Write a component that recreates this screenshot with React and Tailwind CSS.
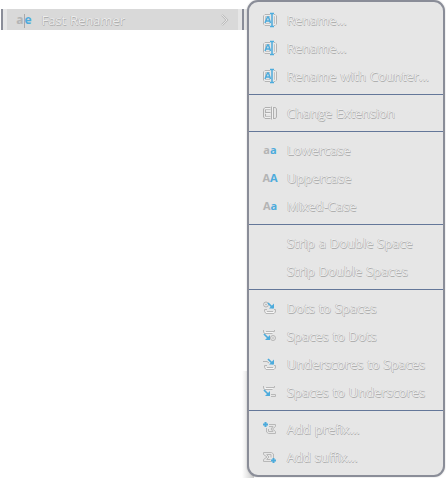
const BLUE = '#4dabdc';

function RenameIcon() {
  return (
    <svg width="16" height="16" viewBox="0 0 16 16" fill="none">
      <path d="M8 2.500H3L1.500 4v8L3 13.500H8M12 2.500h1l1.500 1.500v8l-1.500 1.500h-1" stroke="#b5b5b5" />
      <path d="M8 4.500H3.500v7H8M12 4.500h.5v7H12" stroke="#c4c4c4" />
      <path d="M8 3.500H2.500v9H8M12 3.500h1.500v9H12" stroke="#f2f2f2" strokeWidth=".6" />
      <path d="M3 11L5.500 5h1L8.500 11M4 9h4" stroke={BLUE} strokeWidth="1.500" />
      <path d="M8 1.500h4M8 14.500h4M10 1.500v13" stroke={BLUE} strokeWidth="1.500" />
    </svg>
  );
}

function ExtensionIcon() {
  return (
    <svg width="16" height="16" viewBox="0 0 16 16" fill="none" stroke="#b0b0b0">
      <path d="M8.500 2.500H3L1.500 4v8L3 13.500h5.500M3.500 5v6M3 7.500h5.500M9.500 1.500v13M11.500 2v12M12 2.500h1.500L14.500 4v8l-1 1.500H12" />
      <path d="M3 4.500h5.500M3 11.500h5.500" stroke="#c4c4c4" />
      <path d="M3 3.500h5M3 8.500h5M3 12.500h5M10.500 2v12" stroke="#f5f5f5" strokeWidth=".7" />
    </svg>
  );
}

function CaseIcon({ first, second }) {
  return (
    <span className="flex w-4 justify-center font-['Open_Sans',sans-serif] text-[11px] leading-4 font-bold">
      <span className="text-[#b4b4b4]">{first}</span>
      <span className="text-[#4dabdc]">{second}</span>
    </span>
  );
}

function ConvertIcon({ down, dots }) {
  return (
    <svg width="16" height="16" viewBox="0 0 16 16" fill="none">
      {down ? (
        <>
          {dots ? (
            <>
              <circle cx="4" cy="4.500" r="2.500" stroke="#b5b5b5" />
              <circle cx="4" cy="4.500" r=".8" fill="#b0b0b0" />
            </>
          ) : (
            <path d="M1 5.500h4l2 1.500" stroke="#b5b5b5" />
          )}
          <path d="M5 9.500H2.500v2L4 13.500h8l1.500-1.500v-2.500H12M5 11.500h6" stroke="#b8b8b8" />
          <path d="M4 12.500h8" stroke="#f7f7f7" />
          <path d="M6 3l5 5" stroke={BLUE} strokeWidth="1.700" />
          <path d="M12 3.500v5H7z" fill={BLUE} />
        </>
      ) : (
        <>
          <path d="M1.500 2v2l1 1.500h8M12.500 2v1.500H4" stroke="#b8b8b8" />
          <path d="M3 4.500h8" stroke="#f5f5f5" />
          <path d="M2 6l5 5" stroke={BLUE} strokeWidth="1.700" />
          <path d="M8 7v5H3z" fill={BLUE} />
          {dots ? (
            <>
              <circle cx="11" cy="10" r="2.500" stroke="#b5b5b5" />
              <circle cx="11" cy="10" r=".8" fill="#b0b0b0" />
            </>
          ) : (
            <path d="M9 10.500h4.500v2H9" stroke="#b8b8b8" />
          )}
        </>
      )}
    </svg>
  );
}

function AffixIcon({ suffix }) {
  return (
    <svg width="16" height="16" viewBox="0 0 16 16" fill="none">
      {suffix ? (
        <>
          <path d="M1.500 3.500h8l2 1.500v4M1.500 3.500v2L5 8l-3.500 2.500v2h8M4.500 5.500h4.500v3M4.500 10.500h4M5 6l2 2-2 2" stroke="#b8b8b8" />
          <path d="M11.500 9v5M9 11.500h5" stroke={BLUE} strokeWidth="2" />
        </>
      ) : (
        <>
          <path d="M7 3.500h6.500v2L10.500 8l3 2.500v2h-7L4.500 11V7M7 5.500h4L9 8l2 2.500H6.500V8" stroke="#b8b8b8" />
          <path d="M3.500 1v5M1 3.500h5" stroke={BLUE} strokeWidth="2" />
        </>
      )}
    </svg>
  );
}

function Label({ children, className = '' }) {
  return (
    <span
      className={`font-['Open_Sans','Noto_Sans',sans-serif] text-[13px] leading-5 tracking-[-0.06px] whitespace-nowrap text-[#ececec] antialiased [font-variant-ligatures:none] [text-shadow:-0.5px_-0.5px_0_#b0b0b0,0.5px_0.5px_0_#b0b0b0] [word-spacing:0.6px] ${className}`}
    >
      {children}
    </span>
  );
}

const groups = [
  [
    [<RenameIcon />, 'Rename...'],
    [<RenameIcon />, 'Rename...'],
    [<RenameIcon />, 'Rename with Counter...'],
  ],
  [[<ExtensionIcon />, 'Change Extension']],
  [
    [<CaseIcon first="a" second="a" />, 'Lowercase'],
    [<CaseIcon first="A" second="A" />, 'Uppercase'],
    [<CaseIcon first="A" second="a" />, 'Mixed-Case'],
  ],
  [
    [null, 'Strip a Double Space'],
    [null, 'Strip Double Spaces'],
  ],
  [
    [<ConvertIcon down dots />, 'Dots to Spaces'],
    [<ConvertIcon dots />, 'Spaces to Dots'],
    [<ConvertIcon down />, 'Underscores to Spaces'],
    [<ConvertIcon />, 'Spaces to Underscores'],
  ],
  [
    [<AffixIcon />, 'Add prefix...'],
    [<AffixIcon suffix />, 'Add suffix...'],
  ],
];

export default function App() {
  return (
    <div className="relative flex h-[478px] w-[446px] items-start overflow-hidden bg-white">
      <div className="mt-[9px] flex h-[21px] w-[247px] shrink-0 bg-[#e6e6e6]">
        <div className="w-px bg-white" />
        <div className="w-0.5 bg-[#8a8d98]" />
        <div className="ml-1 flex w-[231px] items-center bg-[#d9d9d9] pl-[9px]">
          <span className="flex w-4 justify-center font-['Open_Sans',sans-serif] text-[12px] leading-5 font-bold">
            <span className="text-[#b4b4b4]">a</span>
            <span className="mt-1 h-3.5 w-px shrink-0 bg-[#aaaaaa]" />
            <span className="text-[#4dabdc]">e</span>
          </span>
          <Label className="ml-[9.5px]">Fast Renamer</Label>
          <svg className="mr-[9px] ml-auto" width="8" height="12" viewBox="0 0 8 12" fill="none">
            <path d="M1 1l5 5-5 5" stroke="#bababa" strokeWidth="2" />
            <path d="M1 1l5 5-5 5" stroke="#e5e5e5" />
          </svg>
        </div>
        <div className="ml-1 w-0.5 bg-[#8a8d98]" />
      </div>
      <div className="absolute top-[371px] left-[242px] h-[107px] w-3 bg-linear-to-r from-white to-[#cccccc]" />
      <div className="relative h-[477px] w-[198px] shrink-0 rounded-[11px] border-2 border-[#8a8d98] bg-[#e6e6e6] py-1 shadow-[0_0_2px_rgba(0,0,0,0.2)]">
        {groups.map((items, g) => (
          <div key={g}>
            {g > 0 && (
              <div className="py-1">
                <div className="h-px bg-[#647799]" />
              </div>
            )}
            {items.map(([icon, text], i) => (
              <div key={i} className="flex h-7 items-center pl-[13px]">
                <span className="flex size-4 shrink-0">{icon}</span>
                <Label className="ml-[9px]">{text}</Label>
              </div>
            ))}
          </div>
        ))}
      </div>
    </div>
  );
}
